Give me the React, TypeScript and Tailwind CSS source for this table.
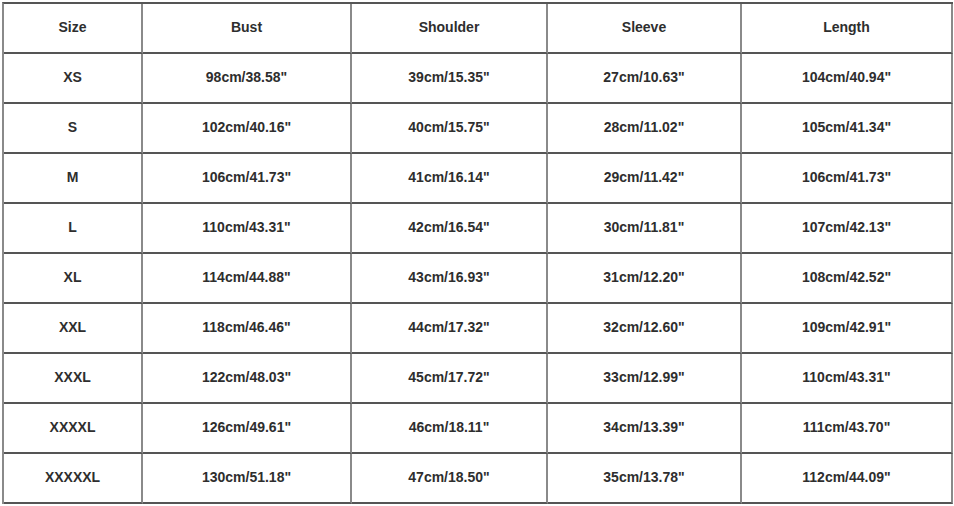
import React from "react";

const headers = ["Size", "Bust", "Shoulder", "Sleeve", "Length"];
const rows: string[][] = [
  ["XS", '98cm/38.58"', '39cm/15.35"', '27cm/10.63"', '104cm/40.94"'],
  ["S", '102cm/40.16"', '40cm/15.75"', '28cm/11.02"', '105cm/41.34"'],
  ["M", '106cm/41.73"', '41cm/16.14"', '29cm/11.42"', '106cm/41.73"'],
  ["L", '110cm/43.31"', '42cm/16.54"', '30cm/11.81"', '107cm/42.13"'],
  ["XL", '114cm/44.88"', '43cm/16.93"', '31cm/12.20"', '108cm/42.52"'],
  ["XXL", '118cm/46.46"', '44cm/17.32"', '32cm/12.60"', '109cm/42.91"'],
  ["XXXL", '122cm/48.03"', '45cm/17.72"', '33cm/12.99"', '110cm/43.31"'],
  ["XXXXL", '126cm/49.61"', '46cm/18.11"', '34cm/13.39"', '111cm/43.70"'],
  ["XXXXXL", '130cm/51.18"', '47cm/18.50"', '35cm/13.78"', '112cm/44.09"'],
];

export default function App() {
  const all = [headers, ...rows];
  return (
    <div className="w-[954px] h-[506px] bg-white pl-[2px] pt-[2px]" style={{ fontFamily: '"Liberation Sans", Arial, sans-serif' }}>
      <div className="grid grid-cols-[139px_209px_196px_194px_211px] border-l-2 border-t-2 border-l-[#8a8a8a] border-t-[#555555] w-[951px]">
        {all.map((r, i) =>
          r.map((c, j) => (
            <div
              key={`${i}-${j}`}
              className="h-[50px] flex items-center justify-center pb-[2px] border-r-2 border-b-2 border-r-[#8a8a8a] border-b-[#555555] text-[14px] font-bold text-[#2e2e2e]"
            >
              {c}
            </div>
          ))
        )}
      </div>
    </div>
  );
}
